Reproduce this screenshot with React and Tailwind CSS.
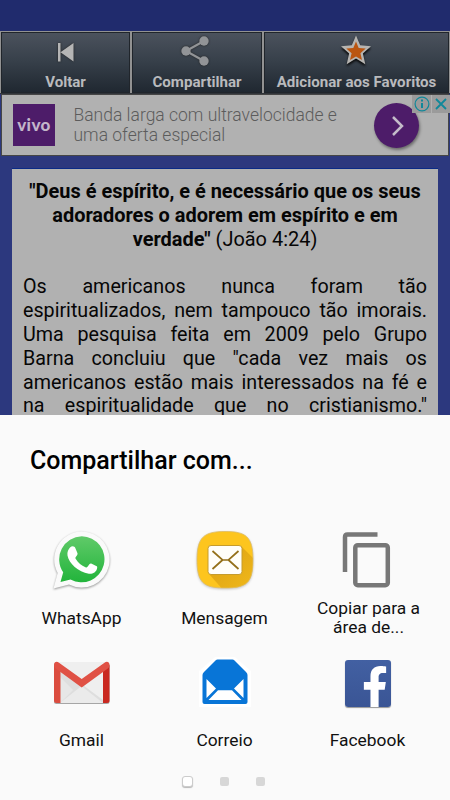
import { FaFacebookF } from "react-icons/fa";

function BackIcon() {
  return (
    <svg width="20" height="24" viewBox="0 0 20 24" className="shrink-0 -translate-y-px drop-shadow-[0_0_1px_#222]">
      <path d="M2 3h2.500v18.500H2zM17.500 3v18.500L4.500 12.200z" fill="#b5b5b5" />
    </svg>
  );
}

function ShareIcon() {
  return (
    <svg width="30" height="32" viewBox="0 0 30 32" className="shrink-0 -translate-x-[2px] -translate-y-[2px] drop-shadow-[0_0_1px_#222]">
      <path d="M24 6 6 16l18 10" fill="none" stroke="#929497" strokeWidth="2.200" />
      <g fill="#929497">
        <circle cx="24" cy="6" r="4.700" />
        <circle cx="6" cy="16" r="4.700" />
        <circle cx="24" cy="26" r="4.700" />
      </g>
    </svg>
  );
}

function StarIcon() {
  return (
    <svg width="36" height="34" viewBox="0 0 36 34" className="shrink-0 -translate-x-px -translate-y-[2px] drop-shadow-[0_2px_1px_#080808]">
      <path d="M18 1.500l4.200 9.800 10.800 1-8.100 7.200 2.400 10.700L18 24.600l-9.300 5.600 2.400-10.700L3 12.300l10.800-1z" fill="#b6b4b1" />
      <path d="M18 7.500l2.700 6.400 7 .7-5.300 4.600 1.600 6.900-6-3.600-6 3.600 1.600-6.900-5.300-4.600 7-.7z" fill="#ba5510" />
    </svg>
  );
}

function NavButton({ label, children, className }) {
  return (
    <button className={`flex h-[59px] shrink-0 flex-col items-center bg-linear-to-b from-[#4b525d] via-[#363f49] to-[#202831] ring-1 ring-[#20252b] ${className}`}>
      <span className="flex h-[40px] shrink-0 items-center justify-center">{children}</span>
      <span className="shrink-0 text-[15.100px] leading-[19px] font-bold whitespace-nowrap text-[#b9babd]">{label}</span>
    </button>
  );
}

function AdBanner() {
  return (
    <div className="relative mx-px flex h-[62px] items-center border border-[#464646] bg-[#b1b1b1] pl-[11px]">
      <div className="flex h-[42px] w-[42px] items-center justify-center bg-[#4d1c69] font-['Lato'] text-[17px] font-black tracking-[0.4px] text-[#c3b5ca]">
        vivo
      </div>
      <p className="ml-[18.500px] text-[17.500px] leading-5 font-light whitespace-nowrap text-[#5c5c5c]">
        Banda larga com ultravelocidade e<br />uma oferta especial
      </p>
      <div className="absolute top-[8px] left-[372px] flex h-[45px] w-[45px] items-center justify-center rounded-full bg-[#4d1c69] shadow-[1px_2px_3px_#0006]">
        <svg width="16" height="24" viewBox="0 0 16 24" className="ml-[2px]">
          <path d="M3 3l9 9-9 9" fill="none" stroke="#c4bcc9" strokeWidth="2.500" />
        </svg>
      </div>
      <div className="absolute top-0 right-[-2px] flex h-[18px] gap-px">
        <span className="flex w-[19px] items-center justify-center bg-[#9b9b9b]">
          <svg width="16" height="16" viewBox="0 0 16 16" fill="none" stroke="#10889a">
            <circle cx="8" cy="8" r="6.900" strokeWidth="1.200" />
            <path d="M8 7v5M8 3.500v2" strokeWidth="2" />
          </svg>
        </span>
        <span className="flex w-[18px] items-center justify-center bg-[#9b9b9b]">
          <svg width="14" height="14" viewBox="0 0 14 14">
            <path d="M2 2l10 10M12 2L2 12" fill="none" stroke="#10889a" strokeWidth="1.800" />
          </svg>
        </span>
      </div>
    </div>
  );
}

const paragraph = [
  "Os americanos nunca foram tão",
  "espiritualizados, nem tampouco tão imorais.",
  "Uma pesquisa feita em 2009 pelo Grupo",
  'Barna concluiu que "cada vez mais os',
  "americanos estão mais interessados na fé e",
  'na espiritualidade que no cristianismo."',
];

function Article() {
  return (
    <article className="mx-3 mt-3 h-[247px] overflow-hidden border-t border-[#0a2a86] bg-[#b1b1b1] px-[11px] pt-[11px] text-[19.700px] leading-[23.800px] text-[#060606]">
      <div className="-mx-2 text-center text-[19.950px] whitespace-nowrap">
        <b>
          "Deus é espírito, e é necessário que os seus<br />
          adoradores o adorem em espírito e em<br />
          verdade"
        </b>{" "}
        (João 4:24)
      </div>
      <div className="mt-[24px]">
        {paragraph.map((line) => (
          <p key={line} className="text-justify whitespace-normal [text-align-last:justify]">{line}</p>
        ))}
      </div>
    </article>
  );
}

function WhatsAppIcon() {
  return (
    <svg width="60" height="60" viewBox="0 0 60 60" className="shrink-0 -translate-x-[2px] drop-shadow-[0_1px_1px_#0006]">
      <path d="M31.500 1.500a28 28 0 1 1-12.500 53L3.500 58.500l4.200-15.500A28 28 0 0 1 31.500 1.500z" fill="#fafafa" />
      <path d="M31.800 6.300a23 23 0 1 1-11.300 43.200L10.500 52l2.700-9.700A23 23 0 0 1 31.800 6.300z" fill="url(#wa)" />
      <path d="M20 17.500c2-2 4.600-1.500 5.400.7l2 4.900c.5 1.200-.1 2-1.600 3.900-.6.700-.5 1.200 0 2 2.500 4 5.600 6.500 9.700 8.200.9.400 1.400.2 2-.5l2.100-2.600c.6-.8 1.200-.8 2.100-.4l4.500 2.200c1 .5 1.200.9.900 2.300-.7 4-4.700 6-8.300 5.500-10.500-1.500-19.900-10.400-21.300-18.200-.6-3.500 1-6.500 2.500-8z" fill="#fff" />
      <defs>
        <linearGradient id="wa" x1="0" y1="0" x2="0" y2="1">
          <stop stopColor="#60ca69" /><stop offset="1" stopColor="#22b43b" />
        </linearGradient>
      </defs>
    </svg>
  );
}

function MessageIcon() {
  return (
    <svg width="60" height="60" viewBox="0 0 60 60" className="drop-shadow-[0_1px_1px_#0003]">
      <defs>
        <clipPath id="tile"><path d="M30 1.500c21 0 28 5 28 28.500S51 58 30 58 2 53 2 30 9 1.500 30 1.500z" /></clipPath>
        <linearGradient id="castShadow" x1="0" y1="0" x2="1" y2="1">
          <stop stopColor="#d99f12" /><stop offset="1" stopColor="#f2ba1b" />
        </linearGradient>
      </defs>
      <g clipPath="url(#tile)">
        <path d="M0 0h60v60H0z" fill="#fdc51e" />
        <path d="M46 16l16 16v30H30L14 44z" fill="url(#castShadow)" />
      </g>
      <path d="M30 1.500c21 0 28 5 28 28.500S51 58 30 58 2 53 2 30 9 1.500 30 1.500z" fill="none" stroke="#dcbb66" strokeWidth="0.800" />
      <rect x="13" y="15.500" width="34" height="29" rx="3" fill="#fffef9" stroke="#c69c2c" />
      <path d="M17.500 21l10 9h6l10-9M17.500 39l10-9M43.500 39l-10-9" fill="none" stroke="#94701a" strokeWidth="1.700" />
    </svg>
  );
}

function CopyIcon() {
  return (
    <svg width="60" height="60" viewBox="0 0 60 60" fill="none" stroke="#777" strokeWidth="4.500" className="shrink-0 -translate-x-px">
      <path d="M8 42V7q0-2.500 2.500-2.500H40.500" />
      <rect x="18.300" y="15.200" width="32.500" height="40" rx="2.500" />
    </svg>
  );
}

function GmailIcon() {
  return (
    <svg width="60" height="60" viewBox="0 0 60 60" className="drop-shadow-[0_1px_0.500px_#0005]">
      <path d="M4 9h51v41H4z" fill="#efefef" />
      <path d="M8 15l47 35H8z" fill="#dedede" />
      <path d="M8 50l21.500-17L51 50z" fill="#ebebeb" />
      <path d="M8 50l13-13-13-13z" fill="#e7e7e7" />
      <path d="M8.500 16v34H4.500Q2 50 2 47.500V12z" fill="#db4c3f" />
      <path d="M51 16v34h4q2.500 0 2.500-2.500V12z" fill="#c92820" />
      <path d="M2 12c0-3.500 3-3.800 5-2.300L29.700 26 52.500 9.700c2-1.500 5-1.200 5 2.300 0 2-.8 2.800-2 3.700L29.700 34.500 4 15.700C2.800 14.800 2 14 2 12z" fill="#e05145" />
    </svg>
  );
}

function MailIcon() {
  return (
    <svg width="60" height="60" viewBox="0 0 60 60">
      <path d="M20 4h20l16 14v36H4V18z" fill="#fff" />
      <path d="M22.500 6.500h15q1 0 2 1L51 19q1.500 1.500 1.500 3V49q0 2-2 2h-41q-2 0-2-2V22q0-1.500 1.500-3L20.500 7.500q1-1 2-1z" fill="#0875d7" />
      <path d="M11.500 26l9.500 9.500-9.500 9.500zM48.500 26L39 35.500l9.500 9.500zM23 37.300h14l9.500 9.700h-33z" fill="#fff" />
    </svg>
  );
}

function FacebookIcon() {
  return (
    <span className="relative block h-[47px] w-[46px] overflow-hidden rounded-[3px] bg-linear-to-b from-[#4260a2] to-[#3a5595] shadow-[0_1px_1px_#0006]">
      <FaFacebookF className="absolute top-[6px] left-[17px] h-[42px] w-[26px] text-white" preserveAspectRatio="none" />
    </span>
  );
}

function ShareTarget({ icon, label, labelClass = "" }) {
  return (
    <button className="flex flex-col items-center">
      <span className="flex h-[60px] w-[60px] items-center justify-center">{icon}</span>
      <span className={`flex h-[56px] items-center justify-center text-center text-[17.400px] leading-[19.500px] whitespace-nowrap text-[#111] ${labelClass}`}>{label}</span>
    </button>
  );
}

export default function App() {
  return (
    <div className="flex h-[800px] w-[450px] flex-col overflow-hidden bg-[#2c387e] font-['Roboto',sans-serif]">
      <div className="h-[31px] shrink-0 bg-[#202b6d]" />
      <nav className="flex h-[63px] shrink-0 items-start gap-[4px] border-b border-[#30343a] bg-[#929292] px-[2px] pt-[2px]">
        <NavButton label="Voltar" className="w-[127px]"><BackIcon /></NavButton>
        <NavButton label="Compartilhar" className="w-[128px]"><ShareIcon /></NavButton>
        <NavButton label="Adicionar aos Favoritos" className="w-[183px]"><StarIcon /></NavButton>
      </nav>
      <AdBanner />
      <Article />
      <section className="flex grow flex-col bg-[#fafafa]">
        <h1 className="mt-[30px] ml-[30px] text-[25px] leading-[32px] font-medium text-black">Compartilhar com...</h1>
        <div className="mt-[53px] grid grid-cols-[143px_143px_143px] pl-[10px]">
          <ShareTarget icon={<WhatsAppIcon />} label="WhatsApp" labelClass="pt-px" />
          <ShareTarget icon={<MessageIcon />} label="Mensagem" labelClass="pt-px" />
          <ShareTarget icon={<CopyIcon />} label={<>Copiar para a<br />área de...</>} labelClass="pl-[2px]" />
        </div>
        <div className="mt-[7px] grid grid-cols-[143px_143px_143px] pl-[10px]">
          <ShareTarget icon={<GmailIcon />} label="Gmail" />
          <ShareTarget icon={<MailIcon />} label="Correio" />
          <ShareTarget icon={<FacebookIcon />} label="Facebook" />
        </div>
        <div className="mt-[7px] flex items-center gap-[27px] pl-[182px]">
          <span className="h-[11px] w-[11px] rounded-[3px] border border-[#ccc] bg-white shadow-[0_1px_1px_#0004]" />
          <span className="h-[9px] w-[9px] rounded-[2px] bg-[#d7d7d7]" />
          <span className="h-[9px] w-[9px] rounded-[2px] bg-[#d7d7d7]" />
        </div>
      </section>
    </div>
  );
}
